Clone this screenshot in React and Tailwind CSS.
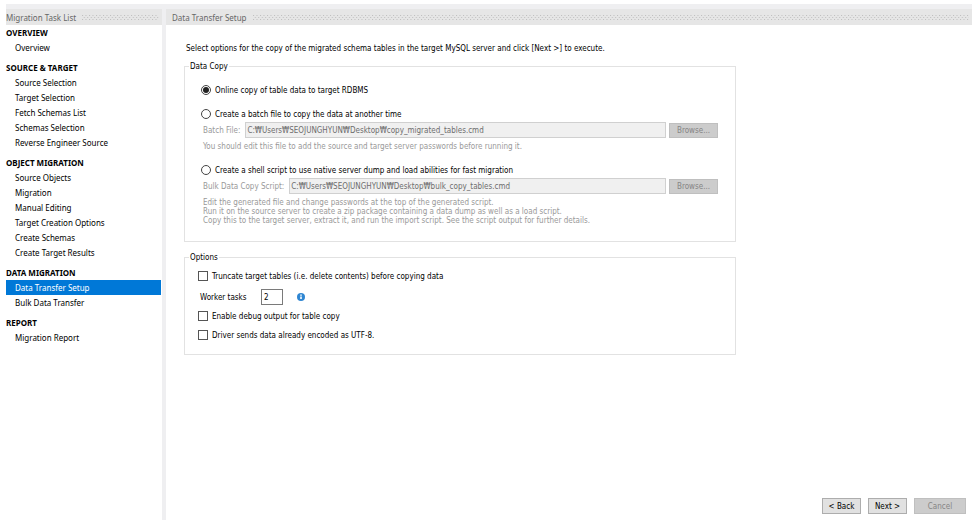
import { useId, useState } from "react";

const groups = [
  { title: "OVERVIEW", items: ["Overview"] },
  {
    title: "SOURCE & TARGET",
    items: [
      "Source Selection",
      "Target Selection",
      "Fetch Schemas List",
      "Schemas Selection",
      "Reverse Engineer Source",
    ],
  },
  {
    title: "OBJECT MIGRATION",
    items: [
      "Source Objects",
      "Migration",
      "Manual Editing",
      "Target Creation Options",
      "Create Schemas",
      "Create Target Results",
    ],
  },
  { title: "DATA MIGRATION", items: ["Data Transfer Setup", "Bulk Data Transfer"] },
  { title: "REPORT", items: ["Migration Report"] },
];

function Grip() {
  const id = useId();
  return (
    <svg className="h-[5px] min-w-0 flex-1" aria-hidden="true">
      <defs>
        <pattern id={id} width="3.5" height="5" patternUnits="userSpaceOnUse">
          <path d="M0 0h1v1h-1zM1.75 2h1v1h-1zM0 4h1v1h-1z" fill="#bdbdbd" />
        </pattern>
      </defs>
      <rect width="100%" height="5" fill={`url(#${id})`} />
    </svg>
  );
}

function PanelTitle({ children, className }) {
  return (
    <div className="border-t-[5px] border-[#efeff1] bg-[#e6e6e6]">
      <h2 className={`flex h-4 items-center gap-[6px] pr-[3px] font-['Noto_Sans',sans-serif] text-[8px] text-[#666] ${className}`}>
        <span className="whitespace-nowrap">{children}</span>
        <Grip />
      </h2>
    </div>
  );
}

function Sidebar() {
  return (
    <aside className="w-[156px] shrink-0">
      <PanelTitle className="pl-0">Migration Task List</PanelTitle>
      <nav className="pr-px font-['Noto_Sans',sans-serif] text-[8px] leading-[15px] text-black">
        {groups.map((group) => (
          <section key={group.title} className="mb-[5px]">
            <h3 className="font-bold">{group.title}</h3>
            <ul>
              {group.items.map((item) => (
                <li key={item}>
                  <a
                    href="#"
                    className={
                      item === "Data Transfer Setup"
                        ? "block bg-[#0078d7] pl-[9px] text-white"
                        : "block pl-[9px]"
                    }
                  >
                    {item}
                  </a>
                </li>
              ))}
            </ul>
          </section>
        ))}
      </nav>
    </aside>
  );
}

function Radio({ label, checked, onChange }) {
  return (
    <label className="flex h-[14px] items-center gap-1">
      <input
        type="radio"
        name="copy-method"
        checked={checked}
        onChange={onChange}
        className="grid size-[10px] appearance-none place-items-center rounded-full border border-[#444] bg-white before:size-[6px] before:rounded-full checked:before:bg-[#222]"
      />
      {label}
    </label>
  );
}

function Check({ label }) {
  return (
    <label className="flex h-[14px] items-center gap-1">
      <input
        type="checkbox"
        className="grid size-[10px] appearance-none place-items-center border border-[#555] bg-white before:size-[6px] checked:before:bg-[#222]"
      />
      {label}
    </label>
  );
}

function FileRow({ id, label, value }) {
  return (
    <div className="flex h-4 items-center pl-[2px]">
      <label htmlFor={id} className="mr-[5px] whitespace-nowrap text-[#999]">
        {label}
      </label>
      <input
        id={id}
        type="text"
        disabled
        value={value}
        readOnly
        className="h-4 min-w-0 flex-1 border border-[#d0d0d0] bg-[#f0f0f0] px-px text-[#6d6d6d]"
      />
      <button
        type="button"
        disabled
        className="ml-[3px] h-[15px] w-[49px] border border-[#bfbfbf] bg-[#cccccc] leading-[13px] text-[#858585]"
      >
        Browse...
      </button>
    </div>
  );
}

function InfoIcon() {
  return (
    <svg viewBox="0 0 8 8" className="size-2" role="img" aria-label="Info">
      <circle cx="4" cy="4" r="4" fill="#2f86d2" />
      <path d="M3 1.6h2v1.2h-2zM3 3.5h2v2.5h-2z" fill="#d4e7f7" />
    </svg>
  );
}

function Group({ title, className, children }) {
  return (
    <fieldset className="border border-[#e2e2e2]">
      <legend className="ml-1 h-[14px] px-px leading-[15px]">{title}</legend>
      <div className={className}>{children}</div>
    </fieldset>
  );
}

export default function App() {
  const [method, setMethod] = useState("online");

  return (
    <div className="flex min-h-screen bg-white pt-1 pr-2 pl-[6px] font-['DejaVu_Sans_Condensed','DejaVu_Sans','Noto_Sans_CJK_KR',sans-serif] text-[8px] leading-[15px] text-black">
      <Sidebar />
      <div className="w-1 shrink-0 bg-[#efeff1]" />
      <main className="flex min-w-0 flex-1 flex-col">
        <PanelTitle className="pl-[6px]">Data Transfer Setup</PanelTitle>

        <form className="w-full max-w-[570px] pt-4 pl-[18px]">
          <p className="mb-[3px] pl-[2px]">
            Select options for the copy of the migrated schema tables in the target MySQL server and
            click [Next &gt;] to execute.
          </p>

          <Group title="Data Copy" className="pt-[10px] pr-[17px] pb-4 pl-4">
            <Radio
              label="Online copy of table data to target RDBMS"
              checked={method === "online"}
              onChange={() => setMethod("online")}
            />
            <div className="mt-[10px]">
              <Radio
                label="Create a batch file to copy the data at another time"
                checked={method === "batch"}
                onChange={() => setMethod("batch")}
              />
              <div className="pt-px">
                <FileRow
                  id="batch-file"
                  label="Batch File:"
                  value="C:₩Users₩SEOJUNGHYUN₩Desktop₩copy_migrated_tables.cmd"
                />
              </div>
              <p className="pt-px pl-[2px] text-[#999]">
                You should edit this file to add the source and target server passwords before
                running it.
              </p>
            </div>
            <div className="mt-[9px]">
              <Radio
                label="Create a shell script to use native server dump and load abilities for fast migration"
                checked={method === "shell"}
                onChange={() => setMethod("shell")}
              />
              <div className="pt-px">
                <FileRow
                  id="bulk-script"
                  label="Bulk Data Copy Script:"
                  value="C:₩Users₩SEOJUNGHYUN₩Desktop₩bulk_copy_tables.cmd"
                />
              </div>
              <p className="pt-1 pl-[2px] leading-[9px] text-[#999]">
                Edit the generated file and change passwords at the top of the generated script.
                <br />
                Run it on the source server to create a zip package containing a data dump as well
                as a load script.
                <br />
                Copy this to the target server, extract it, and run the import script. See the
                script output for further details.
              </p>
            </div>
          </Group>

          <div className="mt-2">
            <Group title="Options" className="px-[13px] pt-[5px] pb-3">
              <Check label="Truncate target tables (i.e. delete contents) before copying data" />
              <div className="mt-[6px] mb-1 flex h-4 items-center pl-[2px]">
                <label htmlFor="workers" className="w-[61px]">
                  Worker tasks
                </label>
                <input
                  id="workers"
                  type="text"
                  defaultValue="2"
                  className="mr-[14px] h-4 w-[22px] border border-[#7a7a7a] bg-white px-[2px]"
                />
                <InfoIcon />
              </div>
              <Check label="Enable debug output for table copy" />
              <div className="mt-[5px]">
                <Check label="Driver sends data already encoded as UTF-8." />
              </div>
            </Group>
          </div>
        </form>

        <footer className="mt-auto flex justify-end gap-[7px] pr-[6px] pb-[6px]">
          <button type="button" className="h-4 w-[39px] border border-[#adadad] bg-[#e1e1e1]">
            &lt; Back
          </button>
          <button type="button" className="h-4 w-[39px] border border-[#adadad] bg-[#e1e1e1]">
            Next &gt;
          </button>
          <button
            type="button"
            disabled
            className="h-4 w-[52px] border border-[#bfbfbf] bg-[#cccccc] text-[#858585]"
          >
            Cancel
          </button>
        </footer>
      </main>
    </div>
  );
}
